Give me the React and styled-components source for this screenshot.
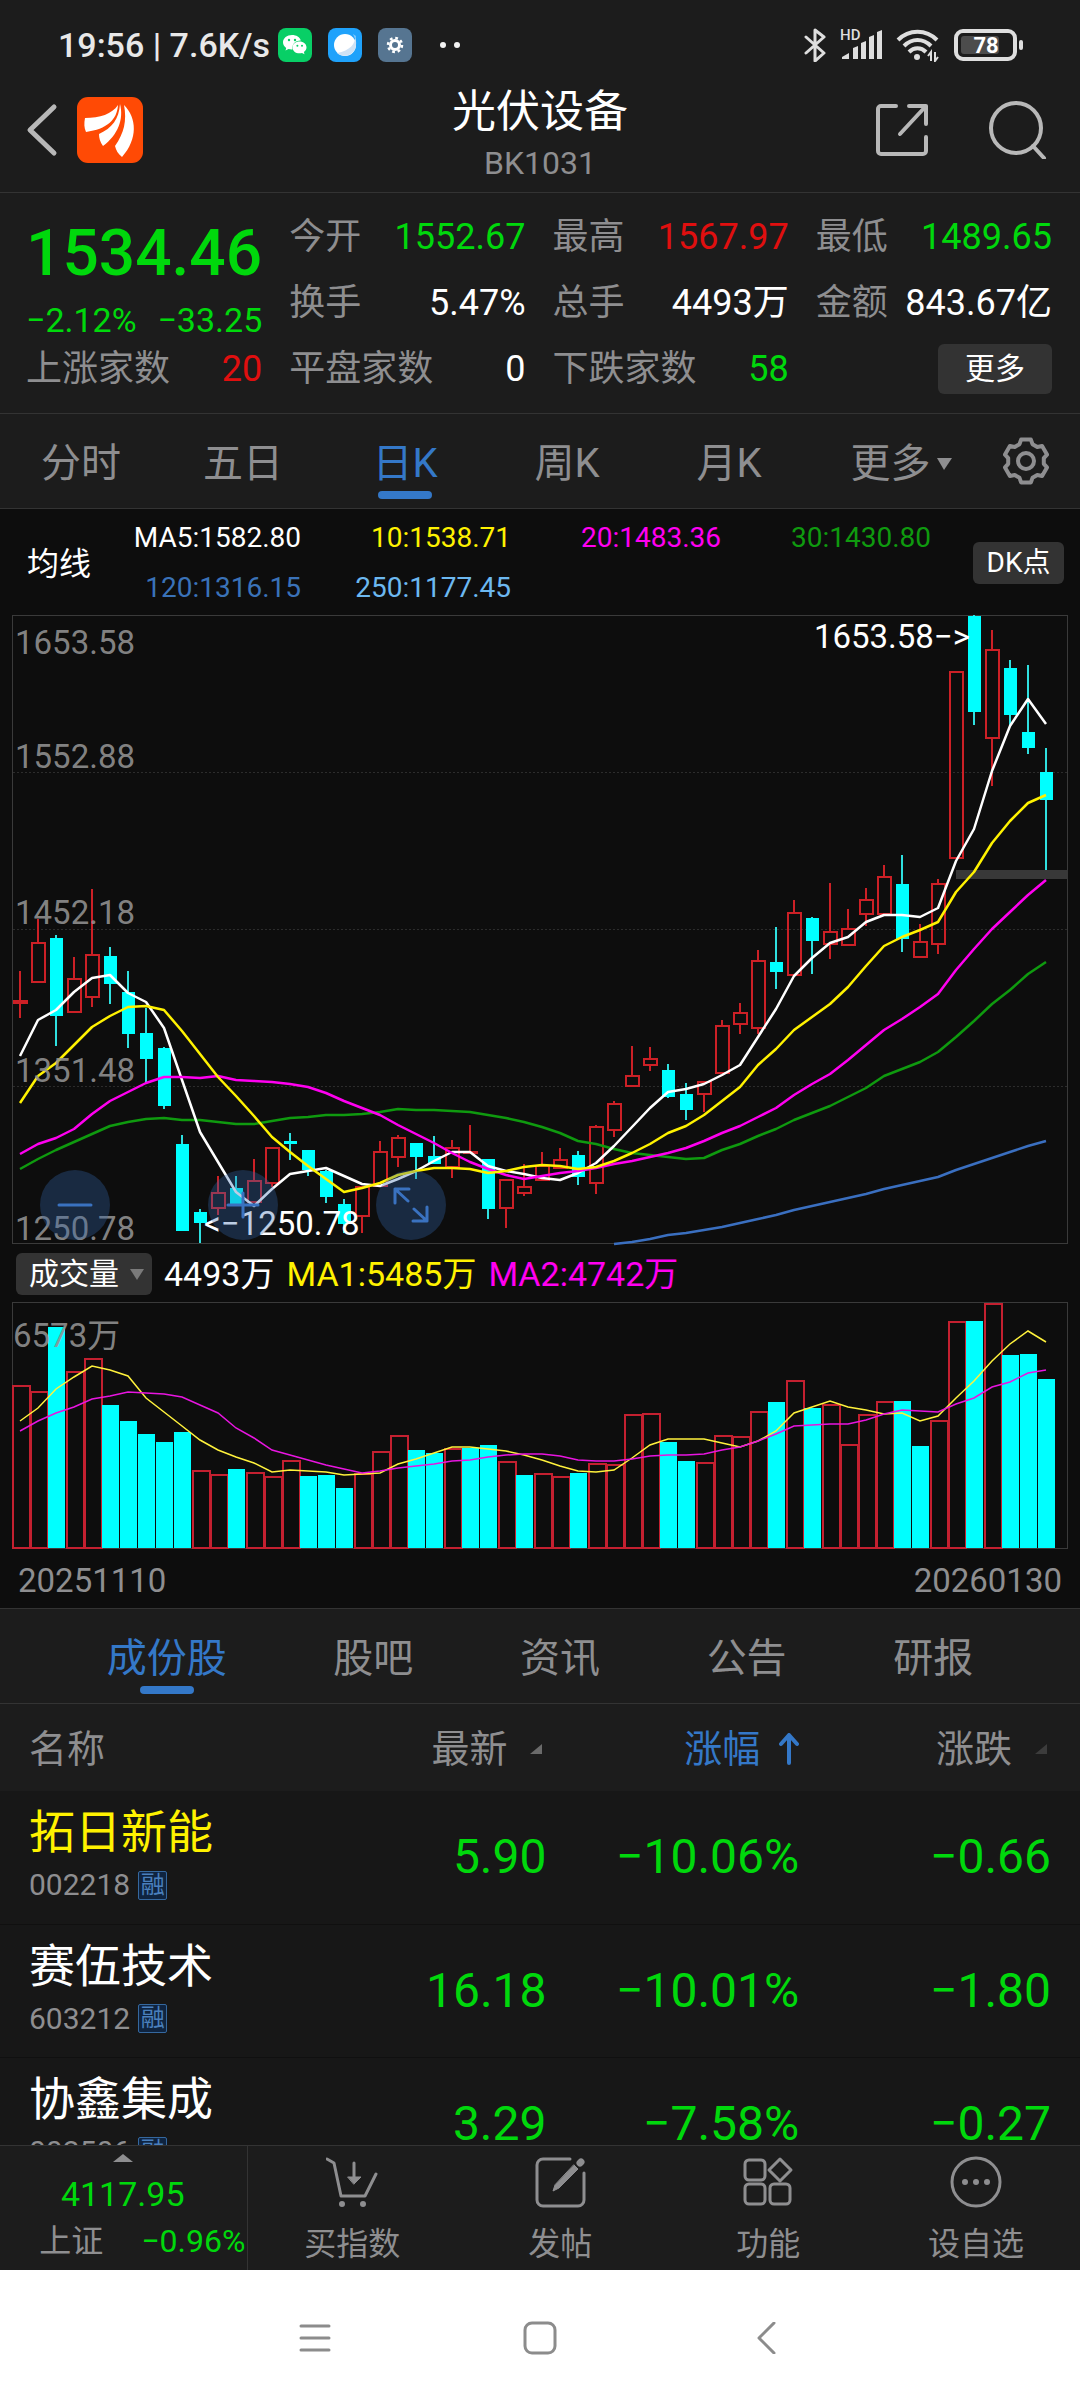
import React from "react"
import styled, { createGlobalStyle, css } from "styled-components"

const GlobalStyle = createGlobalStyle`
  :root {
    --bg-panel: #1c1c1c;
    --bg-chart: #0d0d0d;
    --bg-row: #171717;
    --bg-chip: #333333;
    --border: #333333;
    --muted: #8e8e90;
    --white: #ffffff;
    --green: #00d80c;
    --red: #e00f0f;
    --blue: #3478c8;
    --cyan: #00ffff;
    --yellow: #fff200;
    --magenta: #ff00f0;
  }

  * {
    box-sizing: border-box;
  }

  body {
    margin: 0;
    background: var(--bg-row);
    color: var(--white);
    font-family: Roboto, "Noto Sans CJK SC", sans-serif;
  }

  button,
  select {
    margin: 0;
    padding: 0;
    border: 0;
    background: none;
    color: inherit;
    font: inherit;
    cursor: pointer;
  }

  svg {
    display: block;
  }
`

/* ---------- data ---------- */

const quotes = [
  { label: "今开", value: "1552.67", tone: "green" },
  { label: "最高", value: "1567.97", tone: "red" },
  { label: "最低", value: "1489.65", tone: "green" },
  { label: "换手", value: "5.47%", tone: "white" },
  { label: "总手", value: "4493万", tone: "white" },
  { label: "金额", value: "843.67亿", tone: "white" },
  { label: "上涨家数", value: "20", tone: "red" },
  { label: "平盘家数", value: "0", tone: "white" },
  { label: "下跌家数", value: "58", tone: "green" },
]

const periods = ["分时", "五日", "日K", "周K", "月K"]

const averages = [
  { text: "MA5:1582.80", color: "#ffffff" },
  { text: "10:1538.71", color: "#fff200" },
  { text: "20:1483.36", color: "#ff00f0" },
  { text: "30:1430.80", color: "#0f9a0f" },
  { text: "120:1316.15", color: "#3a72b8" },
  { text: "250:1177.45", color: "#6cb8f0" },
]

const sections = ["成份股", "股吧", "资讯", "公告", "研报"]

const stocks = [
  { name: "拓日新能", code: "002218", last: "5.90", pct: "−10.06%", diff: "−0.66", picked: true },
  { name: "赛伍技术", code: "603212", last: "16.18", pct: "−10.01%", diff: "−1.80" },
  { name: "协鑫集成", code: "002506", last: "3.29", pct: "−7.58%", diff: "−0.27" },
]

// each candle: high, body top, body bottom, low, 1 = up / 0 = down
const candles = [
  [971, 1000, 1004, 1018, 1], [919, 942, 983, 983, 1], [935, 938, 1016, 1046, 0],
  [957, 978, 1013, 1013, 1], [889, 954, 998, 1007, 1], [947, 956, 984, 1004, 0],
  [971, 992, 1034, 1048, 0], [1008, 1033, 1059, 1083, 0], [1047, 1048, 1106, 1109, 0],
  [1135, 1144, 1231, 1231, 0], [1209, 1212, 1223, 1243, 0], [1176, 1192, 1209, 1215, 1],
  [1176, 1188, 1204, 1206, 0], [1159, 1180, 1203, 1203, 1], [1147, 1147, 1184, 1187, 1],
  [1133, 1141, 1144, 1160, 0], [1150, 1150, 1170, 1176, 0], [1170, 1171, 1197, 1203, 0],
  [1199, 1204, 1224, 1233, 0], [1186, 1186, 1217, 1233, 1], [1141, 1151, 1187, 1187, 1],
  [1135, 1137, 1158, 1167, 1], [1143, 1143, 1157, 1179, 0], [1136, 1156, 1164, 1164, 0],
  [1140, 1147, 1168, 1178, 1], [1125, 1151, 1153, 1153, 1], [1159, 1159, 1209, 1219, 0],
  [1179, 1179, 1209, 1228, 1], [1164, 1186, 1194, 1196, 1], [1152, 1165, 1181, 1181, 1],
  [1148, 1159, 1169, 1169, 1], [1151, 1155, 1177, 1185, 0], [1125, 1126, 1184, 1194, 1],
  [1101, 1103, 1131, 1137, 1], [1046, 1075, 1087, 1087, 1], [1047, 1058, 1066, 1071, 1],
  [1064, 1070, 1097, 1098, 0], [1083, 1094, 1110, 1120, 0], [1081, 1081, 1095, 1112, 1],
  [1020, 1025, 1074, 1074, 1], [1003, 1012, 1025, 1034, 1], [950, 960, 1029, 1034, 1],
  [927, 962, 972, 989, 0], [900, 912, 976, 976, 1], [917, 918, 941, 974, 0],
  [883, 931, 945, 959, 1], [909, 928, 946, 946, 1], [888, 899, 915, 926, 1],
  [865, 876, 915, 915, 1], [855, 884, 939, 952, 0], [924, 941, 958, 958, 1],
  [879, 883, 945, 954, 1], [671, 671, 859, 859, 1], [615, 616, 712, 725, 0],
  [630, 649, 739, 786, 1], [660, 668, 715, 725, 0], [665, 732, 748, 754, 0],
  [748, 772, 800, 870, 0],
]

const priceLines = [
  {
    color: "#0f9a0f",
    from: 0,
    ys: [1169, 1159, 1150, 1142, 1134, 1126, 1122, 1119, 1118, 1120, 1120, 1122, 1124, 1124, 1121, 1118, 1117, 1115, 1115, 1114, 1112, 1109, 1110, 1110, 1111, 1112, 1115, 1118, 1122, 1127, 1133, 1141, 1144, 1149, 1153, 1155, 1157, 1159, 1158, 1150, 1144, 1136, 1129, 1120, 1113, 1106, 1097, 1088, 1076, 1069, 1062, 1052, 1037, 1021, 1004, 990, 974, 962],
  },
  {
    color: "#3a6fc0",
    from: 33,
    ys: [1244, 1242, 1239, 1235, 1233, 1230, 1227, 1223, 1219, 1215, 1210, 1206, 1202, 1198, 1194, 1189, 1185, 1181, 1177, 1170, 1164, 1158, 1152, 1146, 1141],
  },
  {
    color: "#ffffff",
    from: 0,
    ys: [1056, 1020, 1010, 992, 978, 975, 993, 1002, 1028, 1080, 1132, 1162, 1192, 1206, 1189, 1174, 1171, 1168, 1176, 1184, 1186, 1179, 1171, 1161, 1152, 1152, 1166, 1171, 1174, 1178, 1180, 1173, 1163, 1146, 1127, 1108, 1092, 1089, 1084, 1075, 1065, 1037, 1009, 976, 958, 943, 937, 922, 915, 915, 917, 908, 861, 829, 771, 726, 699, 724],
  },
  {
    color: "#ff00f0",
    from: 0,
    ys: [1154, 1144, 1138, 1129, 1114, 1101, 1092, 1083, 1077, 1077, 1078, 1076, 1080, 1081, 1082, 1084, 1087, 1093, 1101, 1108, 1115, 1125, 1134, 1143, 1153, 1162, 1169, 1175, 1179, 1176, 1173, 1171, 1168, 1164, 1161, 1157, 1153, 1148, 1141, 1133, 1126, 1117, 1108, 1095, 1084, 1074, 1060, 1045, 1030, 1019, 1007, 994, 970, 949, 929, 912, 895, 880],
  },
  {
    color: "#fff200",
    from: 0,
    ys: [1103, 1076, 1063, 1045, 1027, 1016, 1007, 1006, 1010, 1031, 1054, 1077, 1096, 1116, 1137, 1152, 1166, 1179, 1192, 1188, 1183, 1175, 1171, 1168, 1168, 1169, 1173, 1171, 1167, 1165, 1166, 1169, 1167, 1161, 1153, 1144, 1133, 1126, 1115, 1101, 1087, 1065, 1049, 1030, 1017, 1004, 987, 966, 946, 937, 930, 922, 892, 872, 843, 821, 803, 795],
  },
]

const priceLabels = [
  [654, "1653.58"],
  [768, "1552.88"],
  [924, "1452.18"],
  [1082, "1351.48"],
  [1240, "1250.78"],
]

const volumeTops = [1385, 1391, 1327, 1371, 1358, 1405, 1421, 1434, 1442, 1432, 1470, 1474, 1469, 1472, 1476, 1460, 1476, 1475, 1488, 1473, 1451, 1435, 1450, 1453, 1448, 1448, 1445, 1461, 1475, 1473, 1476, 1473, 1463, 1464, 1414, 1413, 1442, 1461, 1462, 1435, 1436, 1411, 1402, 1380, 1408, 1404, 1444, 1414, 1401, 1401, 1446, 1420, 1321, 1321, 1303, 1355, 1354, 1379]

// days whose close fell against the day before
const volumeDown = new Set([2, 5, 6, 7, 8, 9, 12, 16, 17, 18, 22, 23, 25, 26, 28, 31, 36, 37, 42, 44, 49, 50, 53, 55, 56, 57])

const volumeLines = [
  {
    color: "#fff23c",
    from: 0,
    ys: [1421, 1408, 1389, 1377, 1366, 1370, 1376, 1398, 1412, 1426, 1440, 1450, 1457, 1463, 1472, 1470, 1471, 1472, 1475, 1474, 1473, 1464, 1459, 1453, 1447, 1447, 1449, 1451, 1455, 1460, 1466, 1471, 1472, 1470, 1458, 1445, 1439, 1439, 1439, 1443, 1447, 1441, 1431, 1413, 1407, 1401, 1407, 1410, 1414, 1413, 1421, 1416, 1398, 1381, 1361, 1344, 1331, 1342],
  },
  {
    color: "#e815e0",
    from: 0,
    ys: [1431, 1421, 1413, 1407, 1399, 1396, 1392, 1393, 1394, 1397, 1405, 1413, 1428, 1438, 1450, 1455, 1460, 1465, 1469, 1473, 1471, 1468, 1466, 1464, 1461, 1460, 1457, 1455, 1454, 1454, 1456, 1460, 1461, 1461, 1459, 1456, 1455, 1455, 1454, 1450, 1447, 1441, 1434, 1426, 1425, 1424, 1424, 1420, 1414, 1410, 1411, 1412, 1404, 1398, 1387, 1382, 1373, 1370],
  },
]

const STEP = 18
const FIRST_X = 20

const toPoints = ({ from, ys }) =>
  ys.map((y, i) => `${FIRST_X + (from + i) * STEP},${y}`).join(" ")

/* ---------- layout ---------- */

const Screen = styled.div`
  display: flex;
  flex-direction: column;
  height: 100vh;
  overflow: hidden;
`

const StatusBar = styled.div`
  display: flex;
  justify-content: space-between;
  align-items: center;
  height: 84px;
  padding: 6px 56px 0 58px;
  background: var(--bg-panel);
  color: #e8e8e8;
`

const StatusGroup = styled.div`
  display: flex;
  align-items: center;
  gap: ${props => props.$gap}px;
`

const Clock = styled.span`
  font-size: 34px;
  line-height: 40px;
  font-weight: 500;
  white-space: nowrap;
`

const Header = styled.header`
  display: grid;
  grid-template-columns: 1fr auto 1fr;
  height: 109px;
  padding: 0 25px;
  background: var(--bg-panel);
  border-bottom: 1px solid var(--border);
`

const HeaderSide = styled.div`
  display: flex;
  align-items: center;
  justify-content: ${props => (props.$end ? "flex-end" : "flex-start")};
  gap: ${props => (props.$end ? 60 : 18)}px;
  height: 92px;
  padding-right: 8px;
`

const HeaderTitle = styled.h1`
  margin: 0;
  padding-top: 2px;
  font-size: 44px;
  line-height: 52px;
  font-weight: 400;
  text-align: center;
`

const HeaderCode = styled.div`
  font-size: 32px;
  line-height: 50px;
  text-align: center;
  color: var(--muted);
`

const Summary = styled.section`
  display: grid;
  grid-template-columns: repeat(4, 1fr);
  grid-auto-rows: 66px;
  column-gap: 27px;
  padding: 11px 28px 11px 26px;
  background: var(--bg-panel);
  border-bottom: 1px solid var(--border);
`

const Headline = styled.div`
  grid-row: span 2;
  color: var(--green);
`

const BigPrice = styled.div`
  padding-top: 10px;
  font-size: 64px;
  line-height: 80px;
  font-weight: 500;
`

const Changes = styled.div`
  display: flex;
  justify-content: space-between;
  font-size: 34px;
  line-height: 52px;
`

const Quote = styled.div`
  display: flex;
  justify-content: space-between;
  align-items: center;
  font-size: 36px;
  line-height: 44px;
  white-space: nowrap;
`

const QuoteLabel = styled.span`
  color: var(--muted);
`

const QuoteValue = styled.span`
  color: var(--${props => props.$tone});
`

const chip = css`
  background: var(--bg-chip);
  border-radius: 6px;
`

const MoreButton = styled.button`
  ${chip}
  justify-self: end;
  align-self: center;
  width: 114px;
  height: 50px;
  font-size: 30px;
  line-height: 40px;
`

const PeriodBar = styled.nav`
  display: grid;
  grid-template-columns: repeat(6, 15%) 10%;
  height: 95px;
  background: var(--bg-panel);
  border-bottom: 1px solid var(--border);
`

const Tab = styled.button`
  position: relative;
  display: flex;
  justify-content: center;
  align-items: center;
  gap: 6px;
  padding: 5px 0 0 ${props => (props.$menu ? 20 : 0)}px;
  font-size: 40px;
  line-height: 50px;
  color: ${props => (props.$active ? "var(--blue)" : "var(--muted)")};

  &::after {
    content: "";
    display: ${props => (props.$active ? "block" : "none")};
    position: absolute;
    left: 50%;
    bottom: 9px;
    width: 54px;
    height: 8px;
    margin-left: -27px;
    border-radius: 4px;
    background: var(--blue);
  }
`

const SettingsTab = styled.button`
  display: grid;
  place-items: center;
  color: var(--muted);
`

const AverageBar = styled.div`
  display: flex;
  align-items: center;
  height: 106px;
  padding: 2px 16px 0 27px;
  background: var(--bg-chart);
`

const AverageTitle = styled.span`
  width: 64px;
  padding-top: 2px;
  font-size: 32px;
  line-height: 40px;
`

const AverageGrid = styled.div`
  flex: 1;
  display: grid;
  grid-template-columns: repeat(4, 1fr);
  padding-right: 42px;
`

const Average = styled.span`
  font-size: 28px;
  line-height: 50px;
  text-align: right;
  color: ${props => props.$color};
`

const DkButton = styled.button`
  ${chip}
  width: 91px;
  height: 42px;
  font-size: 28px;
  line-height: 40px;
`

const ChartArea = styled.div`
  position: relative;
  padding: 0 12px;
  background: var(--bg-chart);

  svg.plot {
    width: 100%;
    height: auto;
    overflow: visible;
  }

  svg text {
    font-size: 33px;
  }
`

const RoundTools = styled.div`
  position: absolute;
  left: 40px;
  bottom: 4px;
  display: flex;
  gap: 98px;
`

const RoundButton = styled.button`
  display: grid;
  place-items: center;
  width: 70px;
  height: 70px;
  border-radius: 50%;
  background: rgba(52, 104, 174, 0.33);
`

const VolumeBar = styled.div`
  display: flex;
  align-items: center;
  gap: 12px;
  height: 58px;
  padding: 2px 16px 0;
  background: var(--bg-chart);
  font-size: 34px;
  line-height: 42px;
`

const SelectWrap = styled.label`
  ${chip}
  display: flex;
  align-items: center;
  width: 136px;
  height: 42px;
  padding: 0 8px 0 13px;
`

const Select = styled.select`
  appearance: none;
  flex: 1;
  min-width: 0;
  outline: none;
  font-size: 30px;
  line-height: 42px;
`

const Legend = styled.span`
  color: ${props => props.$color};
`

const DateBar = styled.div`
  display: flex;
  justify-content: space-between;
  height: 59px;
  padding: 6px 18px 0;
  background: var(--bg-chart);
  border-bottom: 1px solid var(--border);
  font-size: 33px;
  line-height: 50px;
  color: var(--muted);
`

const SectionBar = styled.nav`
  display: flex;
  justify-content: space-evenly;
  height: 95px;
  background: var(--bg-panel);
  border-bottom: 1px solid var(--border);
`

const List = styled.main`
  flex: 1 1 0;
  min-height: 0;
  overflow: hidden;
`

const Table = styled.table`
  width: 100%;
  table-layout: fixed;
  border-collapse: collapse;
`

const HeadCell = styled.th`
  height: 87px;
  padding: 3px ${props => (props.$last ? 29 : 0)}px 0 ${props => (props.$first ? 29 : 0)}px;
  background: var(--bg-panel);
  font-size: 38px;
  line-height: 50px;
  font-weight: 400;
  text-align: ${props => (props.$first ? "left" : "right")};
  color: ${props => (props.$active ? "var(--blue)" : "var(--muted)")};
`

const SortButton = styled.button`
  display: inline-flex;
  align-items: center;
`

const SortMark = styled.span`
  display: flex;
  justify-content: flex-end;
  width: 39px;
  padding-right: ${props => (props.$inset ? 4 : 0)}px;
`

const Row = styled.tr`
  height: 133px;
  background: var(--bg-row);
  border-bottom: 1px solid #101010;
`

const NameCell = styled.td`
  padding: 2px 0 0 29px;
`

const StockName = styled.div`
  font-size: 46px;
  line-height: 54px;
  color: ${props => (props.$picked ? "var(--yellow)" : "var(--white)")};
`

const StockCode = styled.div`
  display: flex;
  align-items: center;
  gap: 8px;
  font-size: 30px;
  line-height: 52px;
  color: var(--muted);
`

const Badge = styled.span`
  width: 29px;
  height: 29px;
  border: 1px solid #35689f;
  border-radius: 2px;
  background: #0f2440;
  font-size: 24px;
  line-height: 27px;
  text-align: center;
  color: #4a80bd;
`

const NumberCell = styled.td`
  padding: 0 ${props => (props.$last ? 29 : 0)}px 0 0;
  font-size: 48px;
  line-height: 60px;
  text-align: right;
  color: var(--green);
`

const ActionBar = styled.footer`
  display: grid;
  grid-template-columns: 23% repeat(4, 1fr);
  height: 125px;
  background: var(--bg-panel);
  border-top: 1px solid var(--border);
`

const IndexCell = styled.button`
  display: flex;
  flex-direction: column;
  align-items: center;
  padding: 8px 2px 0 0;
  border-right: 1px solid var(--border);
  color: var(--green);
`

const IndexPrice = styled.span`
  padding-top: 5px;
  font-size: 34px;
  line-height: 54px;
`

const IndexChange = styled.span`
  display: flex;
  align-self: flex-end;
  gap: 38px;
  font-size: 32px;
  line-height: 40px;
  white-space: nowrap;

  b {
    font-weight: 400;
    color: var(--muted);
  }
`

const Action = styled.button`
  display: flex;
  flex-direction: column;
  align-items: center;
  gap: 16px;
  padding-top: 10px;
  font-size: 32px;
  line-height: 40px;
  color: var(--muted);
`

const SystemNav = styled.div`
  display: flex;
  justify-content: center;
  align-items: center;
  gap: 165px;
  height: 130px;
  padding-top: 6px;
  background: #ffffff;
`

const SystemKey = styled.button`
  display: grid;
  place-items: center;
  width: 60px;
  height: 60px;
`

/* ---------- icons ---------- */

const Icon = ({ w, h = w, box = `0 0 ${w} ${h}`, stroke = "currentColor", sw = 3, children }) => (
  <svg
    width={w}
    height={h}
    viewBox={box}
    fill="none"
    stroke={stroke}
    strokeWidth={sw}
    strokeLinecap="round"
    strokeLinejoin="round"
    aria-hidden="true"
  >
    {children}
  </svg>
)

const ChatIcon = () => (
  <svg width="34" height="34" viewBox="0 0 34 34">
    <rect width="34" height="34" rx="8" fill="#08cf66" />
    <path d="M14 7c-5 0-9 3.200-9 7.300 0 2.300 1.300 4.300 3.200 5.600l-.7 2.700 3-1.500c3 .8 4 .3 4 .3-1-6 4-9.200 8.300-9C22 9.200 18.300 7 14 7z" fill="#fff" />
    <path d="M21.500 13.500c-4 0-7 2.600-7 5.900s3 5.900 7 5.900c.9 0 1.700-.1 2.500-.4l2.500 1.300-.6-2.300c1.600-1.100 2.600-2.700 2.600-4.500 0-3.300-3-5.900-7-5.900z" fill="#fff" />
    <g fill="#08cf66">
      <circle cx="11" cy="12" r="1.200" />
      <circle cx="17" cy="12" r="1.200" />
      <circle cx="19.400" cy="17.800" r="1" />
      <circle cx="24" cy="17.800" r="1" />
    </g>
  </svg>
)

const BrowserIcon = () => (
  <svg width="34" height="34" viewBox="0 0 34 34">
    <rect width="34" height="34" rx="8" fill="#1fa2fb" />
    <path d="M25 6l3 2-1 3z" fill="#7cc8ff" />
    <circle cx="17" cy="17" r="11" fill="#fff" />
    <path d="M27 8c1 7-5 15-18 17 6 5 15 3 18-4 2-5 1-9 0-13z" fill="#cfe2f5" />
  </svg>
)

const SettingsAppIcon = () => (
  <svg width="34" height="34" viewBox="0 0 34 34">
    <rect width="34" height="34" rx="8" fill="#567591" />
    <circle cx="17" cy="17" r="4.500" fill="none" stroke="#fff" strokeWidth="3" />
    <circle cx="17" cy="17" r="7" fill="none" stroke="#fff" strokeWidth="2.500" strokeDasharray="2.750 2.750" />
  </svg>
)

const Dots = styled.span`
  display: flex;
  gap: 8px;
  padding-left: 12px;

  i {
    width: 6px;
    height: 6px;
    border-radius: 50%;
    background: #f2f2f2;
  }
`

const SignalIcon = () => (
  <svg width="42" height="46" viewBox="0 -6 42 46" fill="#dedede">
    <text x="0" y="12" fontSize="15" fontWeight="500">HD</text>
    <path d="M2 31v-2l7-4v6zM13 31V20l5-2v13zM21 31V15l5-2v18zM29 31V9l5-2v24zM37 31V4l5-2v29z" />
  </svg>
)

const WifiIcon = () => (
  <svg width="44" height="34" viewBox="0 0 44 34" fill="none" stroke="#dedede" strokeWidth="4">
    <path d="M2 12c11-11 28-11 39 0" />
    <path d="M8 18c8-8 19-8 27 0" />
    <path d="M13 24c5-5 12-5 17 0" />
    <circle cx="21" cy="29" r="3" fill="#dedede" stroke="none" />
    <path d="M35 33v-9l-3 4M39 24v9l3-4" strokeWidth="2" />
  </svg>
)

const BatteryIcon = () => (
  <svg width="70" height="32" viewBox="0 0 70 32">
    <rect x="2" y="2" width="59" height="28" rx="7" fill="none" stroke="#dedede" strokeWidth="4" />
    <rect x="7" y="7" width="38" height="18" rx="3" fill="#4c4c4c" />
    <rect x="65" y="11" width="4" height="10" rx="2" fill="#dedede" />
    <text x="32" y="24" fontSize="22" fontWeight="700" textAnchor="middle" fill="#fff">78</text>
  </svg>
)

const LogoIcon = () => (
  <svg width="66" height="66" viewBox="0 0 66 66">
    <rect width="66" height="66" rx="11" fill="#ff4a05" />
    <g fill="#fff">
      <path d="M8 21c15 0 27-4 33-13-1 15-11 24-32 27-2-4-2-9-1-14z" />
      <path d="M43 7c4 15-2 31-17 42-3-4-4-8-4-12 13-6 20-15 21-30z" />
      <path d="M47 8c13 13 14 34-2 52-4-3-6-7-7-11 9-13 12-25 9-41z" />
    </g>
  </svg>
)

const gearPoints = Array.from({ length: 6 })
  .flatMap((_, k) =>
    [
      [-13, 22],
      [13, 22],
      [21, 18],
      [39, 18],
    ].map(([deg, r]) => {
      const a = ((k * 60 - 90 + deg) * Math.PI) / 180
      return `${(24 + r * Math.cos(a)).toFixed(1)},${(24 + r * Math.sin(a)).toFixed(1)}`
    })
  )
  .join(" ")

const GearIcon = () => (
  <Icon w={48} sw={4}>
    <polygon points={gearPoints} />
    <circle cx="24" cy="24" r="8" />
  </Icon>
)

const CartIcon = () => (
  <Icon w={52}>
    <path d="M1 3l7 4 7 33h24l11-22" />
    <path d="M28 7v15" />
    <path d="M22 21h13l-7 7z" fill="currentColor" strokeWidth="1" />
    <circle cx="16" cy="48" r="3" fill="currentColor" stroke="none" />
    <circle cx="37" cy="48" r="3" fill="currentColor" stroke="none" />
  </Icon>
)

const PostIcon = () => (
  <Icon w={52}>
    <path d="M36 3H9a6 6 0 0 0-6 6v35a6 6 0 0 0 6 6h35a6 6 0 0 0 6-6V17" />
    <path d="M40 9l4 4-19 19-6 3 2-6z" fill="currentColor" strokeWidth="1" />
    <path d="M46 7l1-1" strokeWidth="7" />
  </Icon>
)

const GridIcon = () => (
  <Icon w={52}>
    <rect x="3" y="4" width="20" height="20" rx="4" />
    <rect x="3" y="28" width="20" height="20" rx="4" />
    <rect x="28" y="28" width="20" height="20" rx="4" />
    <path d="M38 3l11 11-11 11-11-11z" />
  </Icon>
)

const DotsIcon = () => (
  <Icon w={52}>
    <circle cx="26" cy="26" r="24" />
    <g fill="currentColor" stroke="none">
      <circle cx="15" cy="26" r="3" />
      <circle cx="26" cy="26" r="3" />
      <circle cx="37" cy="26" r="3" />
    </g>
  </Icon>
)

const Triangle = ({ w, h, points, fill }) => (
  <svg width={w} height={h} aria-hidden="true">
    <polygon points={points} fill={fill} />
  </svg>
)

const actions = [
  { label: "买指数", icon: <CartIcon /> },
  { label: "发帖", icon: <PostIcon /> },
  { label: "功能", icon: <GridIcon /> },
  { label: "设自选", icon: <DotsIcon /> },
]

/* ---------- charts ---------- */

function Candle({ index, data }) {
  const [high, top, bottom, low, up] = data
  const x = FIRST_X + index * STEP

  if (!up) {
    return (
      <g fill="#00ffff">
        <rect x={x - 1} y={high} width="2" height={low - high} fill="#2fe0e0" />
        <rect x={x - 6} y={top} width="13" height={bottom - top} />
      </g>
    )
  }

  return (
    <g fill="none" stroke="#cc2026" strokeWidth="2">
      <path d={`M${x} ${high}V${top}M${x} ${bottom}V${low}`} />
      <rect x={x - 6} y={top + 1} width="13" height={Math.max(bottom - top - 2, 1)} />
    </g>
  )
}

function PriceChart() {
  return (
    <ChartArea>
      <svg className="plot" viewBox="12 615 1056 629" role="img" aria-label="日K">
        <g fill="none" stroke="#3a3a3a">
          <rect x="12.500" y="615.500" width="1055" height="628" />
          <path d="M13 772.500H1067M13 929.500H1067M13 1086.500H1067" stroke="#2c2c2c" strokeDasharray="2 2" />
        </g>
        <rect x="956" y="870" width="112" height="9" fill="#383838" />
        {candles.map((data, i) => (
          <Candle key={i} index={i} data={data} />
        ))}
        {priceLines.map(line => (
          <polyline
            key={line.color}
            points={toPoints(line)}
            fill="none"
            stroke={line.color}
            strokeWidth="2.500"
            strokeLinejoin="round"
          />
        ))}
        <g fill="#929292" fillOpacity="0.9">
          {priceLabels.map(([y, text]) => (
            <text key={text} x="15" y={y}>
              {text}
            </text>
          ))}
        </g>
        <g fill="#ffffff">
          <text x="970" y="648" textAnchor="end">1653.58−&gt;</text>
          <text x="204" y="1235">&lt;−1250.78</text>
        </g>
      </svg>
      <RoundTools>
        <RoundButton aria-label="缩小">
          <Icon w={36} stroke="#3a72c0">
            <path d="M2 18h32" />
          </Icon>
        </RoundButton>
        <RoundButton aria-label="放大">
          <Icon w={36} stroke="#3a72c0">
            <path d="M3 18h30M18 6v24" />
          </Icon>
        </RoundButton>
        <RoundButton aria-label="全屏">
          <Icon w={36} stroke="#3a72c0" sw={3}>
            <path d="M16 2H2v14M2 2l13 12M20 34h14V20M34 34L21 22" />
          </Icon>
        </RoundButton>
      </RoundTools>
    </ChartArea>
  )
}

function VolumeChart() {
  return (
    <ChartArea>
      <svg className="plot" viewBox="12 1302 1056 248" role="img" aria-label="成交量">
        <rect x="12.500" y="1302.500" width="1055" height="246" fill="none" stroke="#3a3a3a" />
        {volumeTops.map((top, i) => {
          const x = 12 + i * STEP
          return volumeDown.has(i) ? (
            <rect key={i} x={x} y={top} width="17" height={1548 - top} fill="#00ffff" />
          ) : (
            <rect
              key={i}
              x={x + 1}
              y={top + 1}
              width="17"
              height={1547 - top}
              fill="none"
              stroke="#c42030"
              strokeWidth="2"
            />
          )
        })}
        {volumeLines.map(line => (
          <polyline
            key={line.color}
            points={toPoints(line)}
            fill="none"
            stroke={line.color}
            strokeWidth="1.500"
          />
        ))}
        <text x="13" y="1347" fill="#929292" fillOpacity="0.9">
          6573万
        </text>
      </svg>
    </ChartArea>
  )
}

/* ---------- page ---------- */

function QuoteItem({ label, value, tone }) {
  return (
    <Quote>
      <QuoteLabel>{label}</QuoteLabel>
      <QuoteValue $tone={tone}>{value}</QuoteValue>
    </Quote>
  )
}

export default function App() {
  return (
    <Screen>
      <GlobalStyle />

      <StatusBar>
        <StatusGroup $gap={8}>
          <Clock>19:56 | 7.6K/s</Clock>
          <StatusGroup $gap={16}>
            <ChatIcon />
            <BrowserIcon />
            <SettingsAppIcon />
            <Dots>
              <i />
              <i />
            </Dots>
          </StatusGroup>
        </StatusGroup>
        <StatusGroup $gap={14}>
          <Icon w={22} h={34} stroke="#dedede">
            <path d="M2 9l18 16-9 8V2l9 7L2 25" />
          </Icon>
          <SignalIcon />
          <WifiIcon />
          <BatteryIcon />
        </StatusGroup>
      </StatusBar>

      <Header>
        <HeaderSide>
          <button aria-label="返回">
            <Icon w={34} h={54} stroke="#b8b8b8" sw={5}>
              <path d="M29 4L5 27l24 23" />
            </Icon>
          </button>
          <LogoIcon />
        </HeaderSide>
        <div>
          <HeaderTitle>光伏设备</HeaderTitle>
          <HeaderCode>BK1031</HeaderCode>
        </div>
        <HeaderSide $end>
          <button aria-label="分享">
            <Icon w={54} stroke="#b8b8b8" sw={4}>
              <path d="M21 3H6a3 3 0 0 0-3 3v42a3 3 0 0 0 3 3h42a3 3 0 0 0 3-3V34" />
              <path d="M34 3h17v18M51 3L25 31" />
            </Icon>
          </button>
          <button aria-label="搜索">
            <Icon w={58} stroke="#b8b8b8" sw={4}>
              <circle cx="27" cy="27" r="25" />
              <path d="M44 45l11 12" />
            </Icon>
          </button>
        </HeaderSide>
      </Header>

      <Summary>
        <Headline>
          <BigPrice>1534.46</BigPrice>
          <Changes>
            <span>−2.12%</span>
            <span>−33.25</span>
          </Changes>
        </Headline>
        {quotes.map(quote => (
          <QuoteItem key={quote.label} {...quote} />
        ))}
        <MoreButton>更多</MoreButton>
      </Summary>

      <PeriodBar>
        {periods.map(period => (
          <Tab key={period} $active={period === "日K"}>
            {period}
          </Tab>
        ))}
        <Tab $menu>
          更多
          <Triangle w={15} h={12} points="0,0 15,0 7,12" fill="#8e8e90" />
        </Tab>
        <SettingsTab aria-label="设置">
          <GearIcon />
        </SettingsTab>
      </PeriodBar>

      <AverageBar>
        <AverageTitle>均线</AverageTitle>
        <AverageGrid>
          {averages.map(item => (
            <Average key={item.text} $color={item.color}>
              {item.text}
            </Average>
          ))}
        </AverageGrid>
        <DkButton>DK点</DkButton>
      </AverageBar>

      <PriceChart />

      <VolumeBar>
        <SelectWrap>
          <Select aria-label="指标" defaultValue="成交量">
            <option>成交量</option>
          </Select>
          <Triangle w={14} h={11} points="0,0 14,0 7,11" fill="#7a7a7a" />
        </SelectWrap>
        <Legend $color="var(--white)">4493万</Legend>
        <Legend $color="var(--yellow)">MA1:5485万</Legend>
        <Legend $color="var(--magenta)">MA2:4742万</Legend>
      </VolumeBar>

      <VolumeChart />

      <DateBar>
        <span>20251110</span>
        <span>20260130</span>
      </DateBar>

      <SectionBar>
        {sections.map(section => (
          <Tab key={section} $active={section === "成份股"}>
            {section}
          </Tab>
        ))}
      </SectionBar>

      <List>
        <Table>
          <colgroup>
            <col />
            <col width="23.4%" />
            <col width="23.4%" />
            <col width="26%" />
          </colgroup>
          <thead>
            <tr>
              <HeadCell $first>名称</HeadCell>
              <HeadCell>
                <SortButton>
                  最新
                  <SortMark $inset>
                    <Triangle w={12} h={10} points="12,0 12,10 0,10" fill="#6a6a6a" />
                  </SortMark>
                </SortButton>
              </HeadCell>
              <HeadCell $active>
                <SortButton>
                  涨幅
                  <SortMark>
                    <Icon w={20} h={32} sw={4}>
                      <path d="M10 30V3M2 11l8-9 8 9" />
                    </Icon>
                  </SortMark>
                </SortButton>
              </HeadCell>
              <HeadCell $last>
                <SortButton>
                  涨跌
                  <SortMark $inset>
                    <Triangle w={12} h={10} points="12,0 12,10 0,10" fill="#3c3c3c" />
                  </SortMark>
                </SortButton>
              </HeadCell>
            </tr>
          </thead>
          <tbody>
            {stocks.map(stock => (
              <Row key={stock.code}>
                <NameCell>
                  <StockName $picked={stock.picked}>{stock.name}</StockName>
                  <StockCode>
                    {stock.code}
                    <Badge>融</Badge>
                  </StockCode>
                </NameCell>
                <NumberCell>{stock.last}</NumberCell>
                <NumberCell>{stock.pct}</NumberCell>
                <NumberCell $last>{stock.diff}</NumberCell>
              </Row>
            ))}
          </tbody>
        </Table>
      </List>

      <ActionBar>
        <IndexCell>
          <Triangle w={20} h={8} points="0,8 10,0 20,8" fill="#8e8e90" />
          <IndexPrice>4117.95</IndexPrice>
          <IndexChange>
            <b>上证</b>−0.96%
          </IndexChange>
        </IndexCell>
        {actions.map(action => (
          <Action key={action.label}>
            {action.icon}
            {action.label}
          </Action>
        ))}
      </ActionBar>

      <SystemNav>
        <SystemKey aria-label="菜单">
          <Icon w={32} stroke="#8c8c8c">
            <path d="M2 4h28M2 16h28M2 28h28" />
          </Icon>
        </SystemKey>
        <SystemKey aria-label="主页">
          <Icon w={34} stroke="#8c8c8c">
            <rect x="2" y="2" width="30" height="30" rx="7" />
          </Icon>
        </SystemKey>
        <SystemKey aria-label="后退">
          <Icon w={32} stroke="#8c8c8c">
            <path d="M25 1L10 16l15 15" />
          </Icon>
        </SystemKey>
      </SystemNav>
    </Screen>
  )
}
